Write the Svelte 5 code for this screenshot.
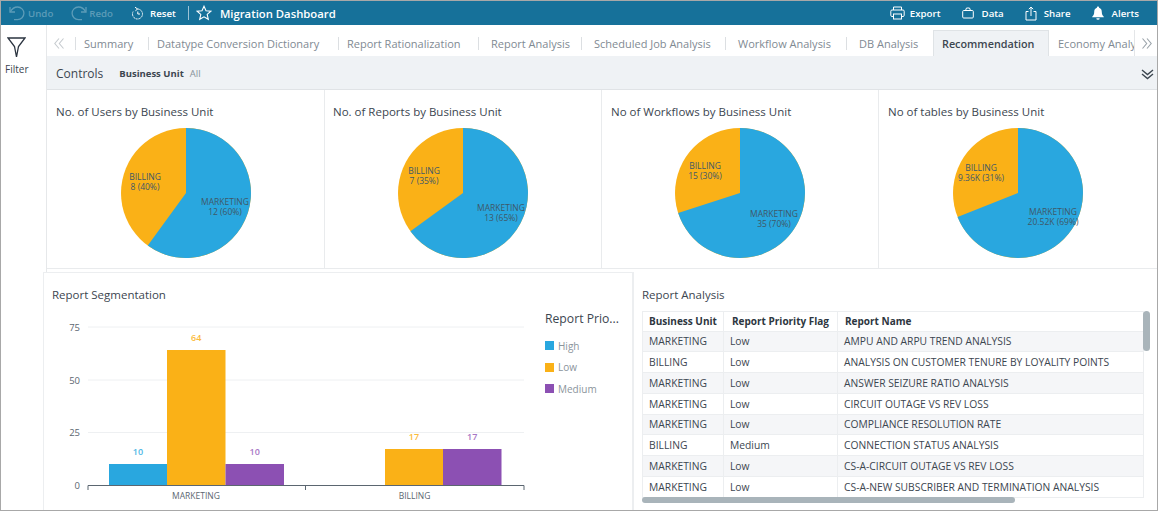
<script>
  const tabs = ['Summary','Datatype Conversion Dictionary','Report Rationalization','Report Analysis','Scheduled Job Analysis','Workflow Analysis','DB Analysis','Recommendation','Economy Analysis'];
  const pies = [
    { title:'No. of Users by Business Unit', frac:.6, m:[39,11.5,'12 (60%)'], b:[-41,-13.5,'8 (40%)'] },
    { title:'No. of Reports by Business Unit', frac:.65, m:[38,17.5,'13 (65%)'], b:[-39,-19.5,'7 (35%)'] },
    { title:'No of Workflows by Business Unit', frac:.7, m:[34,23.5,'35 (70%)'], b:[-35,-24.5,'15 (30%)'] },
    { title:'No of tables by Business Unit', frac:.69, m:[35,21.5,'20.52K (69%)'], b:[-37,-22.5,'9.36K (31%)'] }
  ];
  const R = 65;
  function arc(f){
    const a = f*2*Math.PI;
    return { x:(R*Math.sin(a)).toFixed(2), y:(-R*Math.cos(a)).toFixed(2) };
  }
  const bars = [
    {x:109,w:58,y:464,c:'#29a7df',tc:'#4fb7e5',v:10},
    {x:167,w:58.5,y:350,c:'#fab117',tc:'#fbbb3c',v:64},
    {x:225.5,w:58.5,y:464,c:'#8c50b3',tc:'#a877c6',v:10},
    {x:385,w:58,y:449,c:'#fab117',tc:'#fbbb3c',v:17},
    {x:443,w:58.5,y:449,c:'#8c50b3',tc:'#a877c6',v:17}
  ];
  const grid = [[327,'75'],[380,'50'],[432.5,'25']];
  const legend = [['High','#29a7df'],['Low','#fab117'],['Medium','#8c50b3']];
  const rows = [
    ['MARKETING','Low','AMPU AND ARPU TREND ANALYSIS'],
    ['BILLING','Low','ANALYSIS ON CUSTOMER TENURE BY LOYALITY POINTS'],
    ['MARKETING','Low','ANSWER SEIZURE RATIO ANALYSIS'],
    ['MARKETING','Low','CIRCUIT OUTAGE VS REV LOSS'],
    ['MARKETING','Low','COMPLIANCE RESOLUTION RATE'],
    ['BILLING','Medium','CONNECTION STATUS ANALYSIS'],
    ['MARKETING','Low','CS-A-CIRCUIT OUTAGE VS REV LOSS'],
    ['MARKETING','Low','CS-A-NEW SUBSCRIBER AND TERMINATION ANALYSIS']
  ];
</script>

<div class="frame">
  <header class="topbar">
    <div class="act off first">
      <svg width="17" height="15" viewBox="0 0 17 15" fill="none" stroke="currentColor" stroke-width="1.3"><path d="M1 1v5h5"/><path d="M1.3 6C3 2.6 5.6 1 8.6 1a6.3 6.3 0 0 1 0 12.6H5"/></svg>
      <span>Undo</span>
    </div>
    <div class="act off redo">
      <svg width="17" height="15" viewBox="0 0 17 15" fill="none" stroke="currentColor" stroke-width="1.3"><path d="M16 1v5h-5"/><path d="M15.7 6C14 2.6 11.4 1 8.4 1a6.3 6.3 0 0 0 0 12.6H12"/></svg>
      <span>Redo</span>
    </div>
    <div class="act reset">
      <svg width="12" height="14" viewBox="0 0 12 14" fill="none" stroke="currentColor" stroke-width="1"><path d="M3 1.2 5.6 3 3.4 4.8"/><path d="M5.5 3a5 5 0 1 1-4.4 2.6" stroke-dasharray="2.2 .8"/><path d="M5.8 5.5V8H8"/></svg>
      <span>Reset</span>
    </div>
    <i class="sep"></i>
    <svg class="star" width="16" height="16" viewBox="0 0 16 16" fill="none" stroke="#fff" stroke-width="1.1"><path d="M8 1.2l2 4.5 4.9.5-3.7 3.2 1.1 4.9L8 11.8l-4.3 2.5 1.1-4.9L1.1 6.2 6 5.7z"/></svg>
    <div class="title">Migration Dashboard</div>
    <div class="right">
      <div class="act">
        <svg width="15" height="14" viewBox="0 0 15 14" fill="none" stroke="currentColor" stroke-width="1"><path d="M3.5 4V1h8v3"/><rect x=".8" y="4" width="13.4" height="6.5" rx="1.2"/><rect x="3.5" y="8" width="8" height="5" fill="#16719a"/></svg>
        <span>Export</span>
      </div>
      <div class="act data">
        <svg width="12" height="12" viewBox="0 0 12 12" fill="none" stroke="currentColor" stroke-width="1"><path d="M3.5 3.5 4.5 1h3l1 2.5"/><rect x=".7" y="3.5" width="10.6" height="7.5" rx="1"/></svg>
        <span>Data</span>
      </div>
      <div class="act share">
        <svg width="12" height="15" viewBox="0 0 12 15" fill="none" stroke="currentColor" stroke-width="1"><path d="M3.5 5.5H1V14h10V5.5H8.5"/><path d="M6 10V1M3.8 3.2 6 1l2.200 2.200"/></svg>
        <span>Share</span>
      </div>
      <div class="act alerts">
        <svg width="12" height="14" viewBox="0 0 12 14" fill="currentColor"><path d="M6 .6c.7 0 1.100.5 1.100 1.100C9 2.300 9.800 4 9.800 6c0 2.300.7 3.500 2 4.700v.6H.2v-.6c1.300-1.200 2-2.400 2-4.700 0-2 .8-3.700 2.700-4.300C4.900 1.100 5.300.6 6 .6z"/><path d="M4.300 12.200h3.400a1.700 1.500 0 0 1-3.400 0z"/></svg>
        <span>Alerts</span>
      </div>
    </div>
  </header>

  <div class="body">
    <aside class="side">
      <svg width="19" height="21" viewBox="0 0 19 21" fill="none" stroke="#2b3440" stroke-width="1.3"><path d="M1 1h17l-6.500 8.500L9.500 20 7.500 9.500z"/></svg>
      <span>Filter</span>
    </aside>

    <main class="main">
      <nav class="tabs">
        <div class="chev">
          <svg width="10" height="11" viewBox="0 0 10 11" fill="none" stroke="#c6cbcf" stroke-width="1.1"><path d="M5 .5L.8 5.500 5 10.500M9.500 .5L5.300 5.500l4.200 5"/></svg>
        </div>
        <div class="tablist">
          {#each tabs as t, i}
            <div class="tab" class:active={t==='Recommendation'} class:nosep={i>=7}><span>{t}</span></div>
          {/each}
        </div>
        <div class="chev next">
          <svg width="10" height="11" viewBox="0 0 10 11" fill="none" stroke="#9aa3aa" stroke-width="1.1"><path d="M5 .5l4.200 5L5 10.500M.5 .5l4.200 5-4.200 5"/></svg>
        </div>
      </nav>

      <div class="controls">
        <span class="ctitle">Controls</span>
        <b>Business Unit</b><span class="all">All</span>
        <svg class="collapse" width="13" height="11" viewBox="0 0 13 11" fill="none" stroke="#3c4650" stroke-width="1.4"><path d="M1 1l5.500 4.500L12 1M1 5l5.500 4.500L12 5"/></svg>
      </div>

      <section class="pies">
        {#each pies as p}
          {@const e = arc(p.frac)}
          <article class="pcell">
            <h3>{p.title}</h3>
            <svg class="pie" width="140" height="140" viewBox="-70 -70 140 140">
              <circle r={R} fill="#fab117"/>
              <path d="M0 0L0 {-R}A{R} {R} 0 1 1 {e.x} {e.y}Z" fill="#29a7df"/>
              <text x={p.m[0]} y={p.m[1]} class="pl">MARKETING</text>
              <text x={p.m[0]} y={p.m[1]+10} class="pl">{p.m[2]}</text>
              <text x={p.b[0]} y={p.b[1]} class="pl">BILLING</text>
              <text x={p.b[0]} y={p.b[1]+10} class="pl">{p.b[2]}</text>
            </svg>
          </article>
        {/each}
      </section>

      <section class="lower">
        <article class="seg">
          <h3>Report Segmentation</h3>
          <div class="chartwrap">
            <svg class="chart" width="490" height="202" viewBox="52 309 490 202">
              {#each grid as g}
                <line x1="88" x2="524" y1={g[0]} y2={g[0]} stroke="#eef0f2"/>
                <text x="80" y={g[0]+3.5} class="ax" text-anchor="end">{g[1]}</text>
              {/each}
              <text x="80" y="488.5" class="ax" text-anchor="end">0</text>
              {#each bars as b}
                <rect x={b.x} y={b.y} width={b.w} height={485.5-b.y} fill={b.c}/>
                <text x={b.x+b.w/2} y={b.y-9} class="val" fill={b.tc} text-anchor="middle">{b.v}</text>
              {/each}
              <path d="M88 490v-4.500h436v4.500M305.500 486v4" fill="none" stroke="#5b6670"/>
              <text x="196" y="499" class="cat" text-anchor="middle">MARKETING</text>
              <text x="414.5" y="499" class="cat" text-anchor="middle">BILLING</text>
            </svg>
            <div class="legend">
              <div class="ltitle">Report Prio...</div>
              {#each legend as l}
                <div class="litem"><i style="background:{l[1]}"></i>{l[0]}</div>
              {/each}
            </div>
          </div>
        </article>

        <article class="rep">
          <h3>Report Analysis</h3>
          <div class="table">
            <div class="row head"><div>Business Unit</div><div>Report Priority Flag</div><div>Report Name</div></div>
            {#each rows as r}
              <div class="row"><div>{r[0]}</div><div>{r[1]}</div><div>{r[2]}</div></div>
            {/each}
            <div class="vbar"></div>
            <div class="hbar"></div>
          </div>
        </article>
      </section>
    </main>
  </div>
</div>

<style>
  :global(body){margin:0;background:#fff;}
  .frame{width:1158px;height:511px;box-sizing:border-box;border:1px solid #a8a8a8;font-family:"Open Sans","Noto Sans",sans-serif;color:#3c4650;overflow:hidden;display:flex;flex-direction:column;}
  .topbar{height:24px;background:#16719a;color:#fff;display:flex;align-items:center;flex:none;font-size:9.7px;font-weight:600;}
  .act{display:flex;align-items:center;gap:2px;}
  .off{color:#5c9cb8;}
  .first{margin-left:8px;}
  .redo{margin-left:17px;}
  .reset{margin-left:19px;gap:6px;}
  .sep{width:1px;height:14px;background:#9cc3d5;margin:0 7px 0 12px;}
  .star{flex:none;}
  .title{font-size:11.3px;font-weight:600;margin-left:8px;}
  .right{margin-left:auto;display:flex;align-items:center;padding-right:18px;}
  .right .act{gap:5px;}
  .right .data{margin-left:21px;gap:8px;}
  .right .share{margin-left:21px;gap:7px;}
  .right .alerts{margin-left:21px;gap:8px;}
  .body{display:flex;flex:1;min-height:0;}
  .side{width:46px;flex:none;display:flex;flex-direction:column;align-items:flex-start;padding:12px 0 0 6px;box-sizing:border-box;font-size:10px;gap:4px;border-right:1px solid #e6e8ea;}
  .side span{margin-left:-2px;}
  .main{flex:1;min-width:0;display:flex;flex-direction:column;}
  .tabs{height:31px;display:flex;align-items:stretch;flex:none;font-size:11px;color:#7f8a93;padding-top:5px;box-sizing:border-box;}
  .chev{width:28px;display:flex;align-items:center;justify-content:center;padding-right:4px;box-sizing:border-box;}
  .next{width:23px;border-left:1px solid #e4e6e8;padding-right:0;padding-left:2px;}
  .tablist{display:grid;grid-template-columns:73px 190px 140px 103px 144px 121px 87px 116px 85px;overflow:hidden;width:1059px;}
  .tab{display:flex;align-items:center;position:relative;padding-left:13px;white-space:nowrap;overflow:hidden;}
  .tab:nth-child(-n+3){padding-left:9px;}
  .tab::before{content:"";position:absolute;left:0;top:7px;height:13px;width:1px;background:#dcdfe2;}
  .tab.nosep::before{display:none;}
  .tab.active{background:#eff2f5;border:1px solid #dfe3e6;border-bottom:none;box-sizing:border-box;font-weight:600;font-size:10.8px;color:#3c4650;padding-left:8px;}
  .tab.nosep:last-child{padding-left:9px;}
  .controls{height:34px;flex:none;box-sizing:border-box;background:#eff2f5;border-bottom:1px solid #e0e3e6;display:flex;align-items:center;padding:1px 9px 0;font-size:9.5px;}
  .ctitle{font-size:12px;margin-right:16px;}
  .controls b{font-weight:700;}
  .all{color:#87919a;margin-left:6px;}
  .collapse{margin-left:auto;margin-right:-6px;margin-top:3px;}
  .pies{display:grid;grid-template-columns:278px 277px 277px 1fr;height:178px;flex:none;border-bottom:1px solid #e9ebed;}
  .pcell{border-right:1px solid #e9ebed;display:flex;flex-direction:column;align-items:center;}
  .pcell:last-child{border-right:none;}
  h3{margin:0;font-size:11.5px;font-weight:400;color:#3c4650;align-self:flex-start;}
  .pcell h3{padding:14px 0 0 9px;}
  .pcell:nth-child(2) h3{padding-left:8px;}
  .pie{margin-top:4px;}
  .pl{font-size:8.5px;fill:#3f5868;text-anchor:middle;}
  .lower{display:flex;margin-left:-4px;margin-top:3px;flex:1;min-height:0;}
  .seg{width:590px;box-sizing:border-box;border:1px solid #eceef0;border-bottom:none;padding:14px 0 0 8px;background:#fff;flex:none;}
  .chartwrap{display:flex;margin-top:7px;}
  .chart{flex:none;}
  .ax{font-size:9.5px;fill:#5b6670;}
  .val{font-size:9px;font-weight:600;}
  .cat{font-size:8.5px;fill:#5b6670;}
  .legend{margin-left:3px;padding-top:1px;}
  .ltitle{font-size:12.2px;margin-bottom:8px;white-space:nowrap;}
  .litem{display:flex;align-items:center;gap:4px;font-size:10px;color:#8b949c;height:21.5px;}
  .litem i{width:9px;height:9px;display:block;}
  .rep{flex:1;min-width:0;box-sizing:border-box;padding:15px 0 0 8px;border-left:1px solid #eceef0;}
  .table{position:relative;margin-top:9px;width:509px;height:195px;font-size:10.3px;overflow:hidden;}
  .row{display:grid;grid-template-columns:82px 114px 306px;height:20.75px;width:502px;background:#fff;border-bottom:1px solid #eceef0;box-sizing:border-box;}
  .row:nth-child(even){background:#f5f6f8;}
  .row div{display:flex;align-items:center;padding-left:6px;border-right:1px solid #eceef0;white-space:nowrap;}
  .row div:first-child{border-left:1px solid #eceef0;}
  .head{font-weight:700;font-size:10px;height:20.5px;border-top:1px solid #eceef0;color:#2d3640;background:#fff;}
  .head div:nth-child(2){padding-left:8px;}
  .head div:nth-child(3){padding-left:7px;}
  .vbar{position:absolute;left:501px;top:0;width:7px;height:40px;border-radius:4px;background:#a9b4ba;}
  .hbar{position:absolute;left:0;top:186px;width:373px;height:6px;border-radius:3px;background:#a9b4ba;}
</style>
